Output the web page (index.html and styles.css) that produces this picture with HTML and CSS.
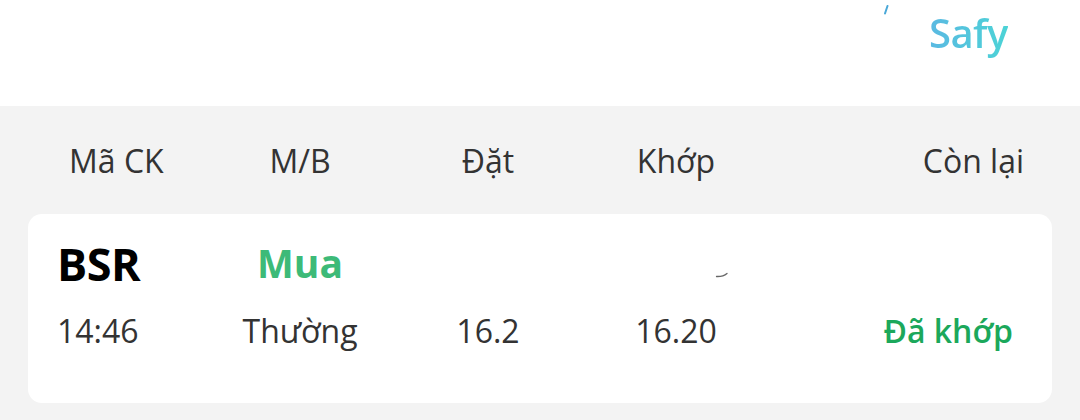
FILE: index.html
```html
<!DOCTYPE html>
<html lang="vi">
<head>
<meta charset="utf-8">
<link rel="stylesheet" href="styles.css">
</head>
<body>
<div class="topbar">
  <div class="brand">
    <svg class="tick" width="6" height="10" viewBox="0 0 6 10"><path d="M4.5 1 L2 8.5" stroke="#4aa8d8" stroke-width="2" stroke-linecap="round"/></svg>
    <span class="safy">Safy</span>
  </div>
</div>
<div class="panel">
  <div class="grid head">
    <div class="c1">Mã CK</div>
    <div class="cc">M/B</div>
    <div class="cc">Đặt</div>
    <div class="cc">Khớp</div>
    <div class="c5">Còn lại</div>
  </div>
  <div class="card">
    <div class="grid row1">
      <div class="c1 sym">BSR</div>
      <div class="cc side">Mua</div>
      <div class="cc"></div>
      <div class="cc"><svg class="mark" width="14" height="6" viewBox="0 0 14 6"><path d="M1.5 4.5 Q8 4.8 12 1.5" stroke="#666" stroke-width="1.3" fill="none" stroke-linecap="round"/></svg></div>
      <div class="c5"></div>
    </div>
    <div class="grid row2">
      <div class="c1">14:46</div>
      <div class="cc">Thường</div>
      <div class="cc">16.2</div>
      <div class="cc">16.20</div>
      <div class="c5 status">Đã khớp</div>
    </div>
  </div>
</div>
</body>
</html>
```
FILE: styles.css
```css
* { box-sizing: border-box; }
html, body { margin: 0; padding: 0; }
body {
  width: 1080px;
  height: 420px;
  overflow: hidden;
  background: #f3f3f3;
  font-family: "Open Sans", "Noto Sans", sans-serif;
  color: #333;
}
.topbar {
  height: 106px;
  background: #fff;
  display: flex;
  justify-content: flex-end;
  padding: 6px 72px 0 0;
}
.brand {
  display: flex;
  align-items: flex-start;
}
.tick {
  margin-top: -1px;
  margin-right: 40px;
}
.safy {
  font-size: 40px;
  font-weight: 600;
  line-height: 54px;
  letter-spacing: -0.5px;
  background: linear-gradient(90deg, #5ab9e2, #4cd3d6);
  -webkit-background-clip: text;
  background-clip: text;
  color: transparent;
}
.panel {
  padding: 33px 28px 0 28px;
}
.grid {
  display: grid;
  grid-template-columns: 178px 188px 188px 188px 1fr;
  align-items: baseline;
}
.cc { text-align: center; }
.c5 { text-align: right; }
.head {
  font-size: 32px;
  line-height: 44px;
  color: #333;
  margin-bottom: 31px;
}
.head .c1 { padding-left: 41px; }
.head .c5 { padding-right: 28px; }
.card {
  background: #fff;
  border-radius: 14px;
  height: 189px;
  padding: 20px 39px 0 29px;
}
.card .grid { grid-template-columns: 149px 188px 188px 188px 1fr; }
.row1 { height: 60px; line-height: 60px; }
.sym {
  font-size: 45px;
  font-weight: 700;
  color: #000;
  letter-spacing: -0.5px;
}
.side {
  font-size: 39px;
  font-weight: 700;
  color: #3dba78;
  position: relative;
  top: -3px;
}
.mark { position: relative; left: 46px; top: -3px; }
.row2 {
  margin-top: 15px;
  font-size: 32px;
  line-height: 44px;
  color: #333;
}
.status {
  font-weight: 600;
  color: #1ba85b;
}
```
